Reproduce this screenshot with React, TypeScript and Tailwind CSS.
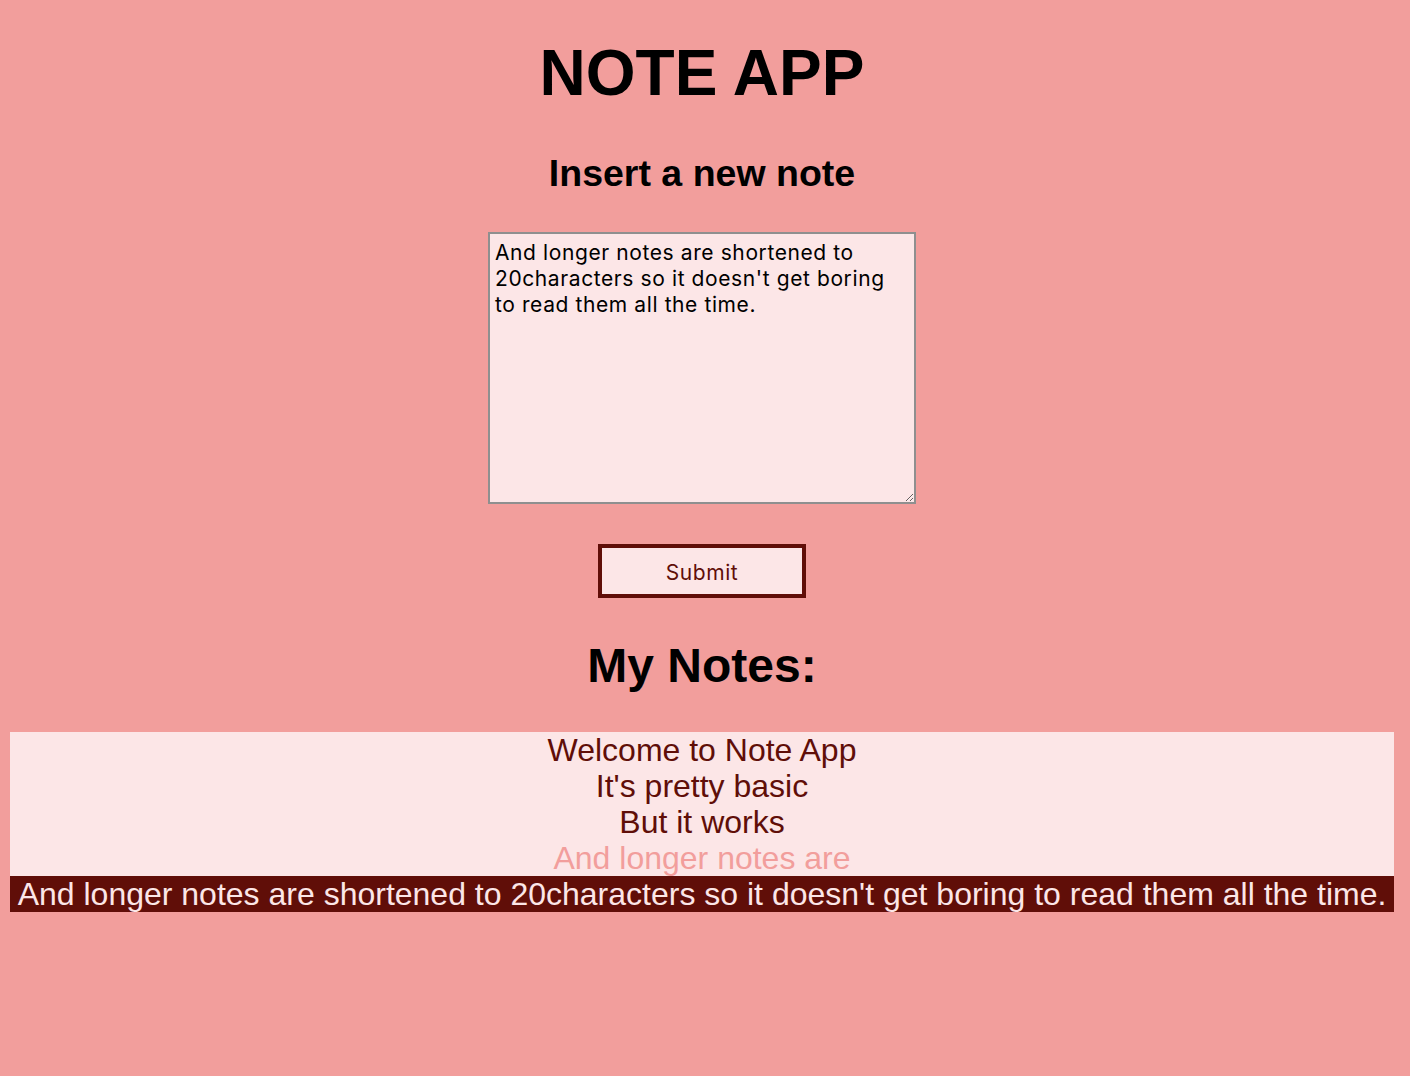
import React from "react";

export default function App() {
  const notes = [
    "Welcome to Note App",
    "It's pretty basic",
    "But it works",
  ];
  const full =
    "And longer notes are shortened to 20characters so it doesn't get boring to read them all the time.";
  return (
    <div className="min-h-[1076px] w-full bg-[#f29e9c]">
      <div className="w-[1404px] flex flex-col items-center font-['Liberation_Sans',Arial,sans-serif] text-black">
        <h1 className="mt-[41px] text-[64px] leading-[64px] font-bold">NOTE APP</h1>
        <h2 className="mt-[50px] text-[37.5px] leading-[37px] font-bold">Insert a new note</h2>
        <textarea
          className="mt-[40px] w-[428px] h-[272px] bg-[#fce6e7] border-2 border-[#8f8f8f] px-[5px] pt-[6px] pb-[5px] text-[21px] leading-[26px] tracking-[0.6px] text-black font-['Inter','Noto_Sans',sans-serif] outline-none"
          defaultValue={full}
        />
        <button className="mt-[40px] w-[208px] h-[54px] pt-[4px] bg-[#fce6e7] border-4 border-[#600e08] text-[#600e08] text-[21px] tracking-[0.6px] font-['Inter','Noto_Sans',sans-serif]">
          Submit
        </button>
        <h3 className="mt-[44px] text-[48px] leading-[48px] font-bold">My Notes:</h3>
        <div className="mt-[42px] self-stretch mx-[10px] bg-[#fce6e7] flex flex-col text-center text-[32px] leading-[36px]">
          {notes.map((n) => (
            <div key={n} className="text-[#600e08]">
              {n}
            </div>
          ))}
          <div className="text-[#f29e9c]">And longer notes are</div>
          <div className="bg-[#600e08] text-[#fce6e7] whitespace-nowrap">{full}</div>
        </div>
      </div>
    </div>
  );
}
